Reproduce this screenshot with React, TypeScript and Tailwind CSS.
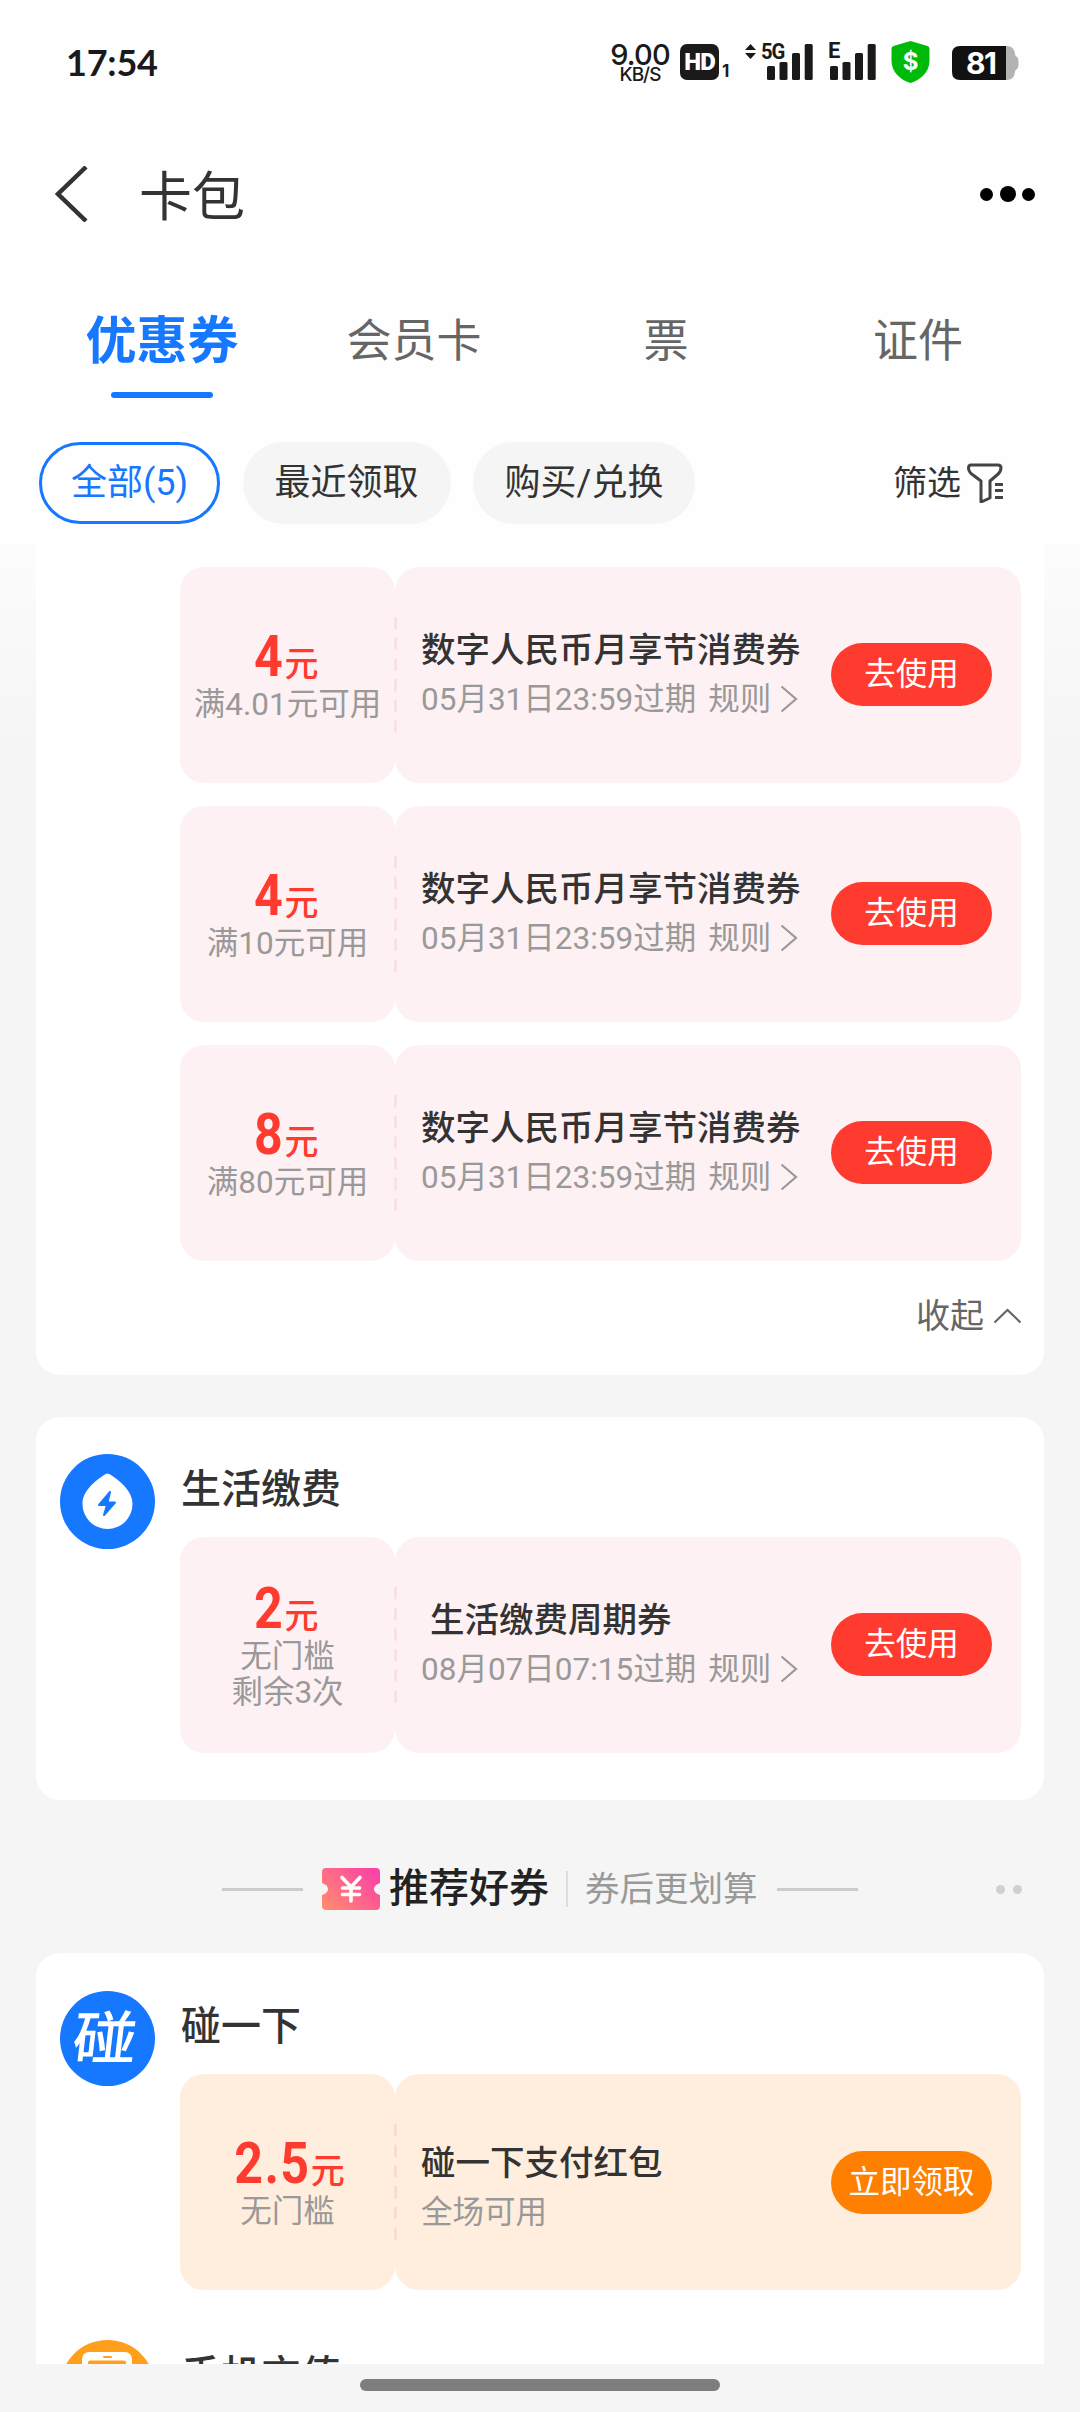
import React from "react";

type Coupon = {
  amount: string;
  notes: string[];
  title: string;
  desc: string;
  hasRule?: boolean;
  indent?: boolean;
  theme: "red" | "orange";
  action: string;
};

const tabs = ["优惠券", "会员卡", "票", "证件"];

const digitalCoupons: Coupon[] = [
  { amount: "4", notes: ["满4.01元可用"] },
  { amount: "4", notes: ["满10元可用"] },
  { amount: "8", notes: ["满80元可用"] },
].map((c) => ({
  ...c,
  title: "数字人民币月享节消费券",
  desc: "05月31日23:59过期",
  hasRule: true,
  theme: "red",
  action: "去使用",
}));

const lifeCoupon: Coupon = {
  amount: "2",
  notes: ["无门槛", "剩余3次"],
  title: "生活缴费周期券",
  desc: "08月07日07:15过期",
  hasRule: true,
  indent: true,
  theme: "red",
  action: "去使用",
};

const tapCoupon: Coupon = {
  amount: "2.5",
  notes: ["无门槛"],
  title: "碰一下支付红包",
  desc: "全场可用",
  theme: "orange",
  action: "立即领取",
};

const Signal = () => (
  <svg width="46" height="36" viewBox="0 0 46 36" fill="#1a1a1a">
    <rect x="0" y="22" width="8" height="14" rx="1.5" />
    <rect x="12.5" y="18" width="8" height="18" rx="1.5" />
    <rect x="25" y="9" width="8" height="27" rx="1.5" />
    <rect x="37.7" y="0" width="8" height="36" rx="1.5" />
  </svg>
);

const StatusBar = () => (
  <div className="flex h-[124px] w-full items-start pl-[66px] text-[#1a1a1a]">
    <span className="mt-[38px] w-[545px] font-['Lato','Noto_Sans_CJK_SC',sans-serif] text-[36px] leading-[48px] font-bold tracking-[-0.2px]">
      17:54
    </span>
    <div className="mt-[42px] flex w-[58px] flex-col items-center font-['Inter',sans-serif] font-medium">
      <span className="text-[29px] leading-[25px] tracking-[-0.8px]">9.00</span>
      <span className="text-[19px] leading-[15px] tracking-[-1px]">KB/S</span>
    </div>
    <div className="mt-[44px] ml-[11px] flex h-9 w-[39px] items-center justify-center rounded-[7px] bg-[#1a1a1a] font-['Roboto',sans-serif] text-[24px] font-black tracking-[-1px] text-white">
      HD
    </div>
    <span className="mt-[61px] ml-[3px] w-[21px] font-['Inter',sans-serif] text-[17px] leading-[20px] font-bold">
      1
    </span>
    <svg className="mt-[44px] ml-[2px]" width="11" height="15" viewBox="0 0 11 15" fill="#1a1a1a">
      <path d="M5.5 0 11 6H0zM5.5 15 0 9h11z" />
    </svg>
    <div className="relative mt-[44px] ml-[11px]">
      <Signal />
      <span className="absolute -top-[3px] -left-[6px] origin-left scale-x-[0.92] font-['Roboto',sans-serif] text-[22px] leading-[22px] font-bold tracking-[-1.2px]">
        5G
      </span>
    </div>
    <div className="relative mt-[44px] ml-[17px]">
      <Signal />
      <span className="absolute -top-[4px] -left-[2px] font-['Roboto',sans-serif] text-[22px] leading-[22px] font-bold">
        E
      </span>
    </div>
    <div className="relative mt-[41px] ml-[15px] h-[42px] w-[39px]">
      <svg width="39" height="42" viewBox="0 0 39 42">
        <path
          d="M19.5 0 36.5 5Q38.5 5.600 38.5 8V20C38.5 31 29 39.500 19.5 42 10 39.500.5 31 .5 20V8Q.5 5.600 2.5 5z"
          fill="#00ba0a"
        />
      </svg>
      <span className="absolute inset-0 text-center font-['Inter',sans-serif] text-[24px] leading-[42px] font-bold text-white">
        $
      </span>
    </div>
    <div className="relative mt-[46px] ml-[22px] h-[34px] w-[67px]">
      <svg width="67" height="34" viewBox="0 0 67 34">
        <path d="M54 0h1q7 0 8 8 0 2 2 3 1.5 1 1.5 6t-1.5 6q-2 1-2 3-1 8-8 8h-1z" fill="#b3b3b3" />
        <path d="M8 0h46v34H8q-8 0-8-8V8q0-8 8-8z" fill="#111" />
      </svg>
      <span className="absolute top-0 left-[14px] font-['Inter',sans-serif] text-[30px] leading-[35px] font-bold tracking-[-1.5px] text-white">
        81
      </span>
    </div>
  </div>
);

const TitleBar = () => (
  <div className="flex h-[140px] w-full items-center pl-[55px] pr-[45px]">
    <svg width="34" height="56" viewBox="0 0 34 56" fill="none" stroke="#333" strokeWidth="4.5">
      <path d="M31 1 3 28l28 27" />
    </svg>
    <h1 className="mt-[7px] ml-[50px] flex-1 text-[53px] leading-[72px] text-[#333]">
      卡包
    </h1>
    <div className="flex items-center gap-[6.5px]">
      <i className="h-[13px] w-[13px] rounded-full bg-black" />
      <i className="h-4 w-4 rounded-full bg-black" />
      <i className="h-[13px] w-[13px] rounded-full bg-black" />
    </div>
  </div>
);

const Tabs = () => (
  <div className="flex h-[178px] w-full px-9 pt-[45px]">
    {tabs.map((tab, i) => (
      <div key={tab} className="flex flex-1 flex-col items-center">
        {i === 0 ? (
          <>
            <span className="text-[51px] leading-[66px] font-bold text-[#1677ff]">
              {tab}
            </span>
            <i className="mt-[17px] h-[6px] w-[102px] rounded-full bg-[#1677ff]" />
          </>
        ) : (
          <span className="text-[45px] leading-[66px] text-[#666]">{tab}</span>
        )}
      </div>
    ))}
  </div>
);

const FilterBar = () => (
  <div className="flex h-[82px] w-full items-center pl-[39px] pr-[76px] text-[36px] leading-[48px] text-[#333]">
    <button className="h-[82px] w-[181px] rounded-full border-[3px] border-[#1677ff] text-[#1677ff]">
      全部(5)
    </button>
    <button className="ml-[23px] h-[82px] w-[208px] rounded-full bg-[#f5f5f5] pr-[1px]">
      最近领取
    </button>
    <button className="ml-[22px] h-[82px] w-[222px] rounded-full bg-[#f5f5f5]">
      购买/兑换
    </button>
    <span className="ml-auto text-[34px]">筛选</span>
    <svg className="ml-[6px]" width="37" height="40" viewBox="0 0 37 40" fill="none" stroke="#444" strokeWidth="3">
      <path d="M4 2h27q3 0 3 3 0 4-4 7l-7 6v17l-9 4V18L6 12Q1.5 9 1.5 5 1.5 2 4 2z" strokeLinejoin="round" />
      <path d="M28 21.5h8M28 27.5h8M28 34.5h8" />
    </svg>
  </div>
);

const CouponItem = ({ coupon }: { coupon: Coupon }) => {
  const red = coupon.theme === "red";
  const bg = red ? "bg-[#fef1f3]" : "bg-[#ffeedd]";

  return (
    <div className="relative flex h-[216px] w-[841px]">
      <div className={`${bg} flex w-[215px] flex-col items-center justify-center rounded-[24px]`}>
        <div className="flex items-baseline text-[#ff3b30]">
          <span className="-ml-1.5 inline-block origin-right scale-x-[0.88] text-[57px] leading-[58px] font-bold tracking-[1.5px]">
            {coupon.amount}
          </span>
          <span className="text-[34px] leading-[34px] font-medium">元</span>
        </div>
        {coupon.notes.map((note) => (
          <span key={note} className="relative top-[1px] text-[31.5px] leading-[36px] whitespace-nowrap text-[#999]">
            {note}
          </span>
        ))}
      </div>
      <div className={`${bg} flex flex-1 items-center rounded-[24px] pr-[29px] pl-[26px]`}>
        <div className={red ? "flex-1" : "flex-1 pt-3"}>
          <div
            className={`text-[34.5px] leading-[49px] font-medium whitespace-nowrap text-[#333] ${
              coupon.indent ? "pl-[9px]" : ""
            }`}
          >
            {coupon.title}
          </div>
          <div className="flex items-center text-[31.5px] leading-[49px] whitespace-nowrap text-[#999]">
            <span>{coupon.desc}</span>
            {coupon.hasRule && (
              <>
                <span className="ml-[12px]">规则</span>
                <svg className="mb-[2px] ml-[9px]" width="18" height="28" viewBox="0 0 18 28" fill="none" stroke="#999" strokeWidth="2.2">
                  <path d="M1.5 1.5 16 14 1.5 26.5" />
                </svg>
              </>
            )}
          </div>
        </div>
        <button
          className={`${red ? "mb-[2px] bg-[#ff3b30]" : "bg-[#ff8000]"} h-[63px] w-[161px] rounded-full text-[31.5px] leading-[63px] whitespace-nowrap text-white`}
        >
          {coupon.action}
        </button>
      </div>
      {/* tear line */}
      <svg className="absolute top-[50px] left-[214px]" width="3" height="116">
        <path
          d="M1.5 0v116"
          stroke={red ? "#fadde0" : "#fbd9c8"}
          strokeWidth="2.5"
          strokeDasharray="12.3 8.4"
        />
      </svg>
    </div>
  );
};

const LifeIcon = () => (
  <svg width="95" height="95" viewBox="0 0 95 95">
    <circle cx="47.5" cy="47.5" r="47.5" fill="#1677ff" />
    <path
      d="M44 21q3.5-3 7 0C60 27 72.5 37 72.5 50a25 25 0 0 1-50 0C22.5 37 35 27 44 21z"
      fill="#fff"
    />
    <path
      d="M50 38 39 51h8l-3 10 11-12.5h-7.5z"
      fill="#1677ff"
      stroke="#1677ff"
      strokeWidth="2"
      strokeLinejoin="round"
    />
  </svg>
);

const TapIcon = () => (
  <div className="flex h-[95px] w-[95px] items-center justify-center rounded-full bg-[#1677ff] pr-[6px]">
    <span className="mt-[2px] scale-y-[0.9] -skew-x-6 text-[64px] leading-[95px] font-medium text-white">
      碰
    </span>
  </div>
);

const PhoneIcon = () => (
  <svg width="95" height="95" viewBox="0 0 95 95">
    <circle cx="47.5" cy="47.5" r="47.5" fill="#ff9f1c" />
    <rect x="22" y="12" width="50" height="72" rx="7" fill="#fff" />
    <rect x="28" y="20.5" width="38" height="50" rx="2" fill="#ff9f1c" />
    <rect x="43" y="16" width="9" height="2" rx="1" fill="#ff9f1c" />
  </svg>
);

type SectionProps = {
  icon: React.ReactNode;
  title: string;
  children?: React.ReactNode;
};

const Section = ({ icon, title, children }: SectionProps) => (
  <div className="flex pl-[24px]">
    <div className="h-[95px] w-[95px] shrink-0">{icon}</div>
    <div className="ml-[25px]">
      <h2 className="mb-[17px] pt-1.5 pl-[1px] text-[40px] leading-[60px] font-medium text-[#333]">
        {title}
      </h2>
      {children}
    </div>
  </div>
);

const RecommendTitle = () => (
  <div className="flex h-[153px] w-full items-center pt-[25px] pl-[222px]">
    <i className="h-[3px] w-[81px] bg-[#ccc]" />
    <svg className="ml-[19px]" width="58" height="42" viewBox="0 0 58 42">
      <defs>
        <linearGradient id="ticket" x1="0" y1="1" x2="1" y2="0.3">
          <stop offset="0" stopColor="#ff8f6b" />
          <stop offset="0.5" stopColor="#ff6a88" />
          <stop offset="1" stopColor="#fb45a4" />
        </linearGradient>
      </defs>
      <path
        d="M4 0h50q4 0 4 4v11q-6 2-6 6t6 6v11q0 4-4 4H4q-4 0-4-4V27q6-2 6-6t-6-6V4q0-4 4-4z"
        fill="url(#ticket)"
      />
      <path
        d="M20 9.500 29 19l9-9.500M29 19v14M20.500 20h17M20.500 26.500h17"
        fill="none"
        stroke="#fff"
        strokeWidth="3.6"
        strokeLinecap="round"
      />
    </svg>
    <span className="ml-[9px] text-[40px] leading-[60px] font-medium text-[#222]">
      推荐好券
    </span>
    <i className="ml-[17px] h-9 w-[2px] bg-[#ddd]" />
    <span className="ml-[17px] text-[34.5px] leading-[60px] text-[#999]">
      券后更划算
    </span>
    <i className="ml-[19px] h-[3px] w-[81px] bg-[#ccc]" />
    <div className="ml-auto flex gap-2 pr-[58px]">
      <i className="h-[9px] w-[9px] rounded-full bg-[#d0d0d0]" />
      <i className="h-[9px] w-[9px] rounded-full bg-[#d0d0d0]" />
    </div>
  </div>
);

export default function App() {
  return (
    <div className="flex h-[2412px] w-[1080px] flex-col overflow-hidden bg-[#f5f5f5] font-['Roboto','Noto_Sans_CJK_SC',sans-serif]">
      <header className="h-[544px] shrink-0 bg-[#fefefe]">
        <StatusBar />
        <TitleBar />
        <Tabs />
        <FilterBar />
      </header>

      <main className="flex h-[1820px] shrink-0 flex-col overflow-hidden bg-[linear-gradient(#fcfcfc,#f5f5f5_210px)] px-9">
        <div className="h-[831px] shrink-0 rounded-b-[24px] bg-white pt-[23px] pl-36">
          <div className="flex flex-col gap-[23px]">
            {digitalCoupons.map((c, i) => (
              <CouponItem key={i} coupon={c} />
            ))}
          </div>
          <div className="mt-[31px] flex items-center justify-end pr-[22px] text-[34px] leading-[48px] text-[#666]">
            收起
            <svg className="ml-[9px]" width="29" height="16" viewBox="0 0 29 16" fill="none" stroke="#666" strokeWidth="2.2">
              <path d="M1.5 14.5 14.5 2l13 12.5" />
            </svg>
          </div>
        </div>

        <div className="mt-[42px] h-[383px] shrink-0 rounded-[24px] bg-white pt-[37px]">
          <Section icon={<LifeIcon />} title="生活缴费">
            <CouponItem coupon={lifeCoupon} />
          </Section>
        </div>

        <div className="-mx-9 shrink-0">
          <RecommendTitle />
        </div>

        <div className="flex h-[620px] shrink-0 flex-col gap-[50px] rounded-t-[24px] bg-white pt-[38px]">
          <Section icon={<TapIcon />} title="碰一下">
            <CouponItem coupon={tapCoupon} />
          </Section>
          <Section icon={<PhoneIcon />} title="手机充值" />
        </div>
      </main>

      <footer className="flex h-12 shrink-0 justify-center bg-[#f5f5f5] pt-[15px]">
        <i className="h-3 w-[360px] rounded-full bg-[#7d7d7d]" />
      </footer>
    </div>
  );
}
